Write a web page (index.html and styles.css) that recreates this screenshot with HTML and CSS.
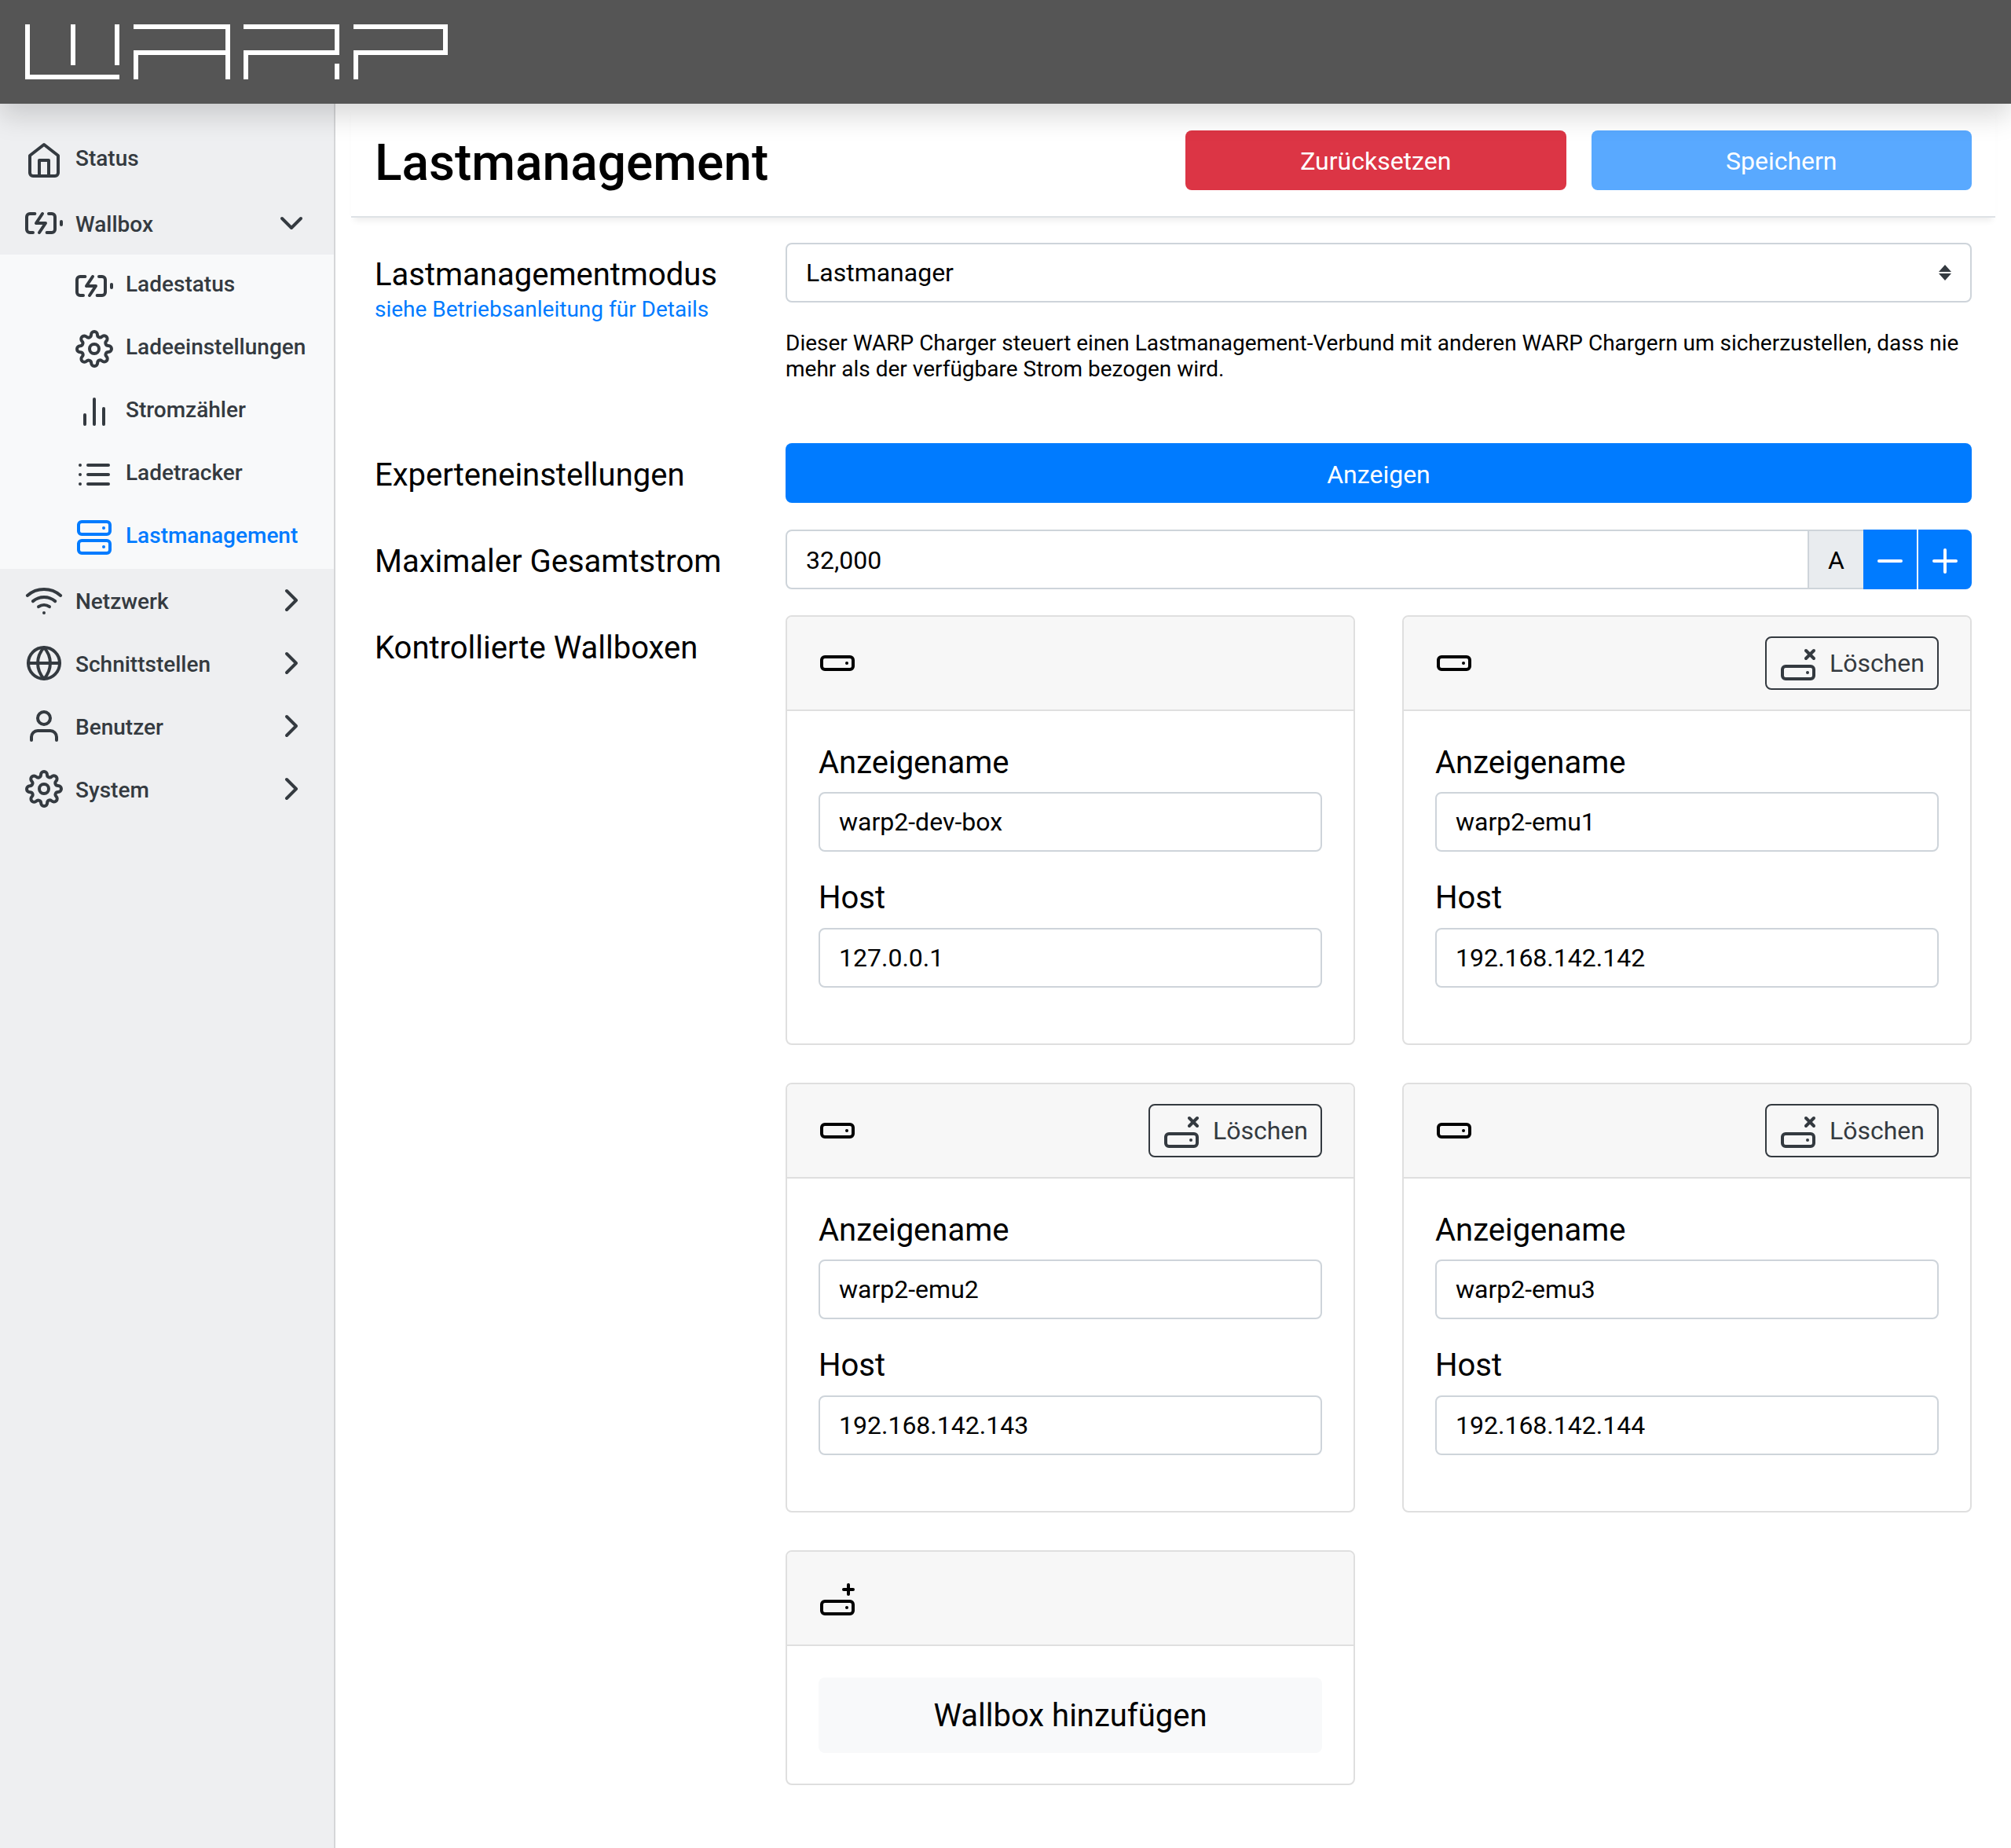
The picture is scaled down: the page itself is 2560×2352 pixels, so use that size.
FILE: index.html
```html
<!DOCTYPE html>
<html lang="de">
<head>
    <meta charset="UTF-8">
    <meta name="viewport" content="width=device-width, initial-scale=1.0">
    <title>WARP Lastmanagement</title>
    <link rel="stylesheet" href="styles.css">
</head>
<body>
    <svg width="0" height="0" class="defs">
        <symbol id="i-charger" viewBox="0 0 24 24"><path d="M5 18H3a2 2 0 0 1-2-2V8a2 2 0 0 1 2-2h3.19M15 6h2a2 2 0 0 1 2 2v8a2 2 0 0 1-2 2h-3.19"/><line x1="23" y1="13" x2="23" y2="11"/><polyline points="11 6 7 12 13 12 9 18"/></symbol>
        <symbol id="i-home" viewBox="0 0 24 24"><path d="M3 9l9-7 9 7v11a2 2 0 0 1-2 2H5a2 2 0 0 1-2-2z"/><polyline points="9 22 9 12 15 12 15 22"/></symbol>
        <symbol id="i-gear" viewBox="0 0 24 24"><circle cx="12" cy="12" r="3"/><path d="M19.4 15a1.65 1.65 0 0 0 .33 1.82l.06.06a2 2 0 0 1 0 2.83 2 2 0 0 1-2.83 0l-.06-.06a1.65 1.65 0 0 0-1.82-.33 1.65 1.65 0 0 0-1 1.51V21a2 2 0 0 1-2 2 2 2 0 0 1-2-2v-.09A1.65 1.65 0 0 0 9 19.4a1.65 1.65 0 0 0-1.82.33l-.06.06a2 2 0 0 1-2.83 0 2 2 0 0 1 0-2.83l.06-.06a1.65 1.65 0 0 0 .33-1.82 1.65 1.65 0 0 0-1.51-1H3a2 2 0 0 1-2-2 2 2 0 0 1 2-2h.09A1.65 1.65 0 0 0 4.6 9a1.65 1.65 0 0 0-.33-1.82l-.06-.06a2 2 0 0 1 0-2.83 2 2 0 0 1 2.83 0l.06.06a1.65 1.65 0 0 0 1.82.33H9a1.65 1.65 0 0 0 1-1.51V3a2 2 0 0 1 2-2 2 2 0 0 1 2 2v.09a1.65 1.65 0 0 0 1 1.51 1.65 1.65 0 0 0 1.82-.33l.06-.06a2 2 0 0 1 2.83 0 2 2 0 0 1 0 2.83l-.06.06a1.65 1.65 0 0 0-.33 1.82V9a1.65 1.65 0 0 0 1.51 1H21a2 2 0 0 1 2 2 2 2 0 0 1-2 2h-.09a1.65 1.65 0 0 0-1.51 1z"/></symbol>
        <symbol id="i-bars" viewBox="0 0 24 24"><line x1="18" y1="20" x2="18" y2="10"/><line x1="12" y1="20" x2="12" y2="4"/><line x1="6" y1="20" x2="6" y2="14"/></symbol>
        <symbol id="i-list" viewBox="0 0 24 24"><line x1="8" y1="6" x2="21" y2="6"/><line x1="8" y1="12" x2="21" y2="12"/><line x1="8" y1="18" x2="21" y2="18"/><line x1="3" y1="6" x2="3.01" y2="6"/><line x1="3" y1="12" x2="3.01" y2="12"/><line x1="3" y1="18" x2="3.01" y2="18"/></symbol>
        <symbol id="i-server" viewBox="0 0 24 24"><rect x="2" y="2" width="20" height="8" rx="2"/><rect x="2" y="14" width="20" height="8" rx="2"/><line x1="18" y1="6" x2="18.01" y2="6"/><line x1="18" y1="18" x2="18.01" y2="18"/></symbol>
        <symbol id="i-wifi" viewBox="0 0 24 24"><path d="M5 12.55a11 11 0 0 1 14.08 0"/><path d="M1.42 9a16 16 0 0 1 21.16 0"/><path d="M8.53 16.11a6 6 0 0 1 6.95 0"/><line x1="12" y1="20" x2="12.01" y2="20"/></symbol>
        <symbol id="i-globe" viewBox="0 0 24 24"><circle cx="12" cy="12" r="10"/><line x1="2" y1="12" x2="22" y2="12"/><path d="M12 2a15.3 15.3 0 0 1 4 10 15.3 15.3 0 0 1-4 10 15.3 15.3 0 0 1-4-10 15.3 15.3 0 0 1 4-10z"/></symbol>
        <symbol id="i-user" viewBox="0 0 24 24"><path d="M20 21v-2a4 4 0 0 0-4-4H8a4 4 0 0 0-4 4v2"/><circle cx="12" cy="7" r="4"/></symbol>
        <symbol id="i-down" viewBox="0 0 24 24"><polyline points="6 9 12 15 18 9"/></symbol>
        <symbol id="i-right" viewBox="0 0 24 24"><polyline points="9 18 15 12 9 6"/></symbol>
        <symbol id="i-box" viewBox="0 0 24 24"><rect x="2" y="8" width="20" height="8" rx="2"/><line x1="18" y1="12" x2="18.01" y2="12"/></symbol>
        <symbol id="i-box-x" viewBox="0 0 24 24"><rect x="2" y="14" width="20" height="8" rx="2"/><line x1="18" y1="18" x2="18.01" y2="18"/><line x1="17" y1="4" x2="22" y2="9"/><line x1="22" y1="4" x2="17" y2="9"/></symbol>
        <symbol id="i-box-plus" viewBox="0 0 24 24"><rect x="2" y="14" width="20" height="8" rx="2"/><line x1="18" y1="18" x2="18.01" y2="18"/><line x1="19" y1="3.5" x2="19" y2="9.5"/><line x1="16" y1="6.5" x2="22" y2="6.5"/></symbol>
        <symbol id="i-minus" viewBox="0 0 24 24"><line x1="5" y1="12" x2="19" y2="12"/></symbol>
        <symbol id="i-plus" viewBox="0 0 24 24"><line x1="12" y1="5" x2="12" y2="19"/><line x1="5" y1="12" x2="19" y2="12"/></symbol>
    </svg>

    <header class="topbar">
        <svg class="logo" viewBox="0 0 538 70" width="538" height="70" role="img" aria-label="WARP">
            <path d="M3 0V67H120M61 0V52M117 0V52"/>
            <path d="M138 3H258V70M141 70V36H261"/>
            <path d="M278 3H397V36H278M281 70V36M397 50V70"/>
            <path d="M418 3H535V36H418M421 70V36M535 3V36H538M535 3H538"/>
        </svg>
    </header>

    <div class="layout">
        <nav class="sidebar">
            <a class="nav-item raised"><svg class="icon"><use href="#i-home"/></svg><span>Status</span></a>
            <a class="nav-item"><svg class="icon"><use href="#i-charger"/></svg><span>Wallbox</span><svg class="icon chevron"><use href="#i-down"/></svg></a>
            <div class="subnav">
                <a class="nav-item raised"><svg class="icon"><use href="#i-charger"/></svg><span>Ladestatus</span></a>
                <a class="nav-item raised"><svg class="icon"><use href="#i-gear"/></svg><span>Ladeeinstellungen</span></a>
                <a class="nav-item raised"><svg class="icon"><use href="#i-bars"/></svg><span>Stromzähler</span></a>
                <a class="nav-item raised"><svg class="icon"><use href="#i-list"/></svg><span>Ladetracker</span></a>
                <a class="nav-item raised active"><svg class="icon"><use href="#i-server"/></svg><span>Lastmanagement</span></a>
            </div>
            <a class="nav-item"><svg class="icon"><use href="#i-wifi"/></svg><span>Netzwerk</span><svg class="icon chevron"><use href="#i-right"/></svg></a>
            <a class="nav-item"><svg class="icon"><use href="#i-globe"/></svg><span>Schnittstellen</span><svg class="icon chevron"><use href="#i-right"/></svg></a>
            <a class="nav-item"><svg class="icon"><use href="#i-user"/></svg><span>Benutzer</span><svg class="icon chevron"><use href="#i-right"/></svg></a>
            <a class="nav-item"><svg class="icon"><use href="#i-gear"/></svg><span>System</span><svg class="icon chevron"><use href="#i-right"/></svg></a>
        </nav>

        <main class="content">
            <div class="page-head">
                <h1>Lastmanagement</h1>
                <div class="page-actions">
                    <button class="btn btn-red">Zurücksetzen</button>
                    <button class="btn btn-blue disabled">Speichern</button>
                </div>
            </div>

            <div class="form-row">
                <div class="form-label">
                    <label>Lastmanagementmodus</label>
                    <a class="help-link">siehe Betriebsanleitung für Details</a>
                </div>
                <div>
                    <div class="select">Lastmanager
                        <svg class="select-arrows" viewBox="0 0 16 20" width="16" height="20"><path d="M8 0L16 9H0zM8 20L0 11H16z"/></svg>
                    </div>
                    <p class="hint">Dieser WARP Charger steuert einen Lastmanagement-Verbund mit anderen WARP Chargern um sicherzustellen, dass nie mehr als der verfügbare Strom bezogen wird.</p>
                </div>
            </div>

            <div class="form-row">
                <div class="form-label"><label>Experteneinstellungen</label></div>
                <button class="btn btn-blue btn-wide">Anzeigen</button>
            </div>

            <div class="form-row">
                <div class="form-label"><label>Maximaler Gesamtstrom</label></div>
                <div class="input-group">
                    <div class="input">32,000</div>
                    <span class="addon">A</span>
                    <button class="step"><svg class="icon"><use href="#i-minus"/></svg></button>
                    <button class="step"><svg class="icon"><use href="#i-plus"/></svg></button>
                </div>
            </div>

            <div class="form-row">
                <div class="form-label"><label>Kontrollierte Wallboxen</label></div>
                <div class="card-grid">
                    <section class="card">
                        <div class="card-head"><svg class="icon"><use href="#i-box"/></svg></div>
                        <div class="card-body">
                            <label>Anzeigename</label>
                            <div class="input">warp2-dev-box</div>
                            <label>Host</label>
                            <div class="input">127.0.0.1</div>
                        </div>
                    </section>
                    <section class="card">
                        <div class="card-head"><svg class="icon"><use href="#i-box"/></svg>
                            <button class="btn-delete"><svg class="icon"><use href="#i-box-x"/></svg>Löschen</button></div>
                        <div class="card-body">
                            <label>Anzeigename</label>
                            <div class="input">warp2-emu1</div>
                            <label>Host</label>
                            <div class="input">192.168.142.142</div>
                        </div>
                    </section>
                    <section class="card">
                        <div class="card-head"><svg class="icon"><use href="#i-box"/></svg>
                            <button class="btn-delete"><svg class="icon"><use href="#i-box-x"/></svg>Löschen</button></div>
                        <div class="card-body">
                            <label>Anzeigename</label>
                            <div class="input">warp2-emu2</div>
                            <label>Host</label>
                            <div class="input">192.168.142.143</div>
                        </div>
                    </section>
                    <section class="card">
                        <div class="card-head"><svg class="icon"><use href="#i-box"/></svg>
                            <button class="btn-delete"><svg class="icon"><use href="#i-box-x"/></svg>Löschen</button></div>
                        <div class="card-body">
                            <label>Anzeigename</label>
                            <div class="input">warp2-emu3</div>
                            <label>Host</label>
                            <div class="input">192.168.142.144</div>
                        </div>
                    </section>
                    <section class="card">
                        <div class="card-head"><svg class="icon"><use href="#i-box-plus"/></svg></div>
                        <div class="card-body card-body-add">
                            <button class="btn-add">Wallbox hinzufügen</button>
                        </div>
                    </section>
                </div>
            </div>
        </main>
    </div>
</body>
</html>
```

FILE: styles.css
```css
* {
    box-sizing: border-box;
}
body {
    margin: 0;
    height: 2352px;
    overflow: hidden;
    display: flex;
    flex-direction: column;
    font-family: Roboto, "Liberation Sans", sans-serif;
    font-size: 32px;
    line-height: 48px;
    color: #000;
    background: #fff;
}
.defs {
    position: absolute;
}
.icon {
    width: 48px;
    height: 48px;
    flex: none;
    fill: none;
    stroke: currentColor;
    stroke-width: 2;
    stroke-linecap: round;
    stroke-linejoin: round;
}

.topbar {
    height: 132px;
    flex: none;
    padding: 31px 32px 0;
    background: #555;
    box-shadow: 0 16px 32px rgba(0, 0, 0, 0.15);
    position: relative;
    z-index: 1;
}
.logo {
    display: block;
    fill: none;
    stroke: #fff;
    stroke-width: 6;
}

.layout {
    flex: 1;
    display: flex;
    min-height: 0;
}
.sidebar {
    width: 427px;
    flex: none;
    background: #eeeff1;
    border-right: 2px solid #d5d6d8;
    padding-top: 32px;
}
.nav-item {
    height: 80px;
    display: flex;
    align-items: center;
    gap: 16px;
    padding: 0 32px;
    font-size: 28px;
    font-weight: 500;
    color: #343a40;
}
.nav-item span {
    margin-top: 4px;
}
.nav-item.raised span {
    margin-top: 0;
    margin-bottom: 4px;
}
.chevron {
    margin-left: auto;
    margin-right: -2px;
}
.subnav {
    background: #f8f9fa;
}
.subnav .nav-item {
    padding-left: 96px;
}
.nav-item.active {
    color: #007bff;
}

.content {
    flex: 1;
    min-width: 0;
    padding: 0 50px 0 20px;
}
.page-head {
    height: 145px;
    display: flex;
    align-items: flex-start;
    justify-content: space-between;
    margin-right: -30px;
    padding: 34px 30px 0;
    background: #fff;
    border-bottom: 2px solid #dee2e6;
    box-shadow: 0 8px 8px -4px rgba(0, 0, 0, 0.07);
}
h1 {
    margin: 4px 0 0;
    font-size: 64px;
    line-height: 76px;
    font-weight: 500;
}
.page-actions {
    width: 1001px;
    display: grid;
    grid-template-columns: 1fr 1fr;
    gap: 32px;
}

.btn {
    height: 76px;
    padding: 2px 0 0;
    border: 0;
    border-radius: 8px;
    font: inherit;
    color: #fff;
}
.btn-red {
    background: #dc3545;
}
.btn-blue {
    background: #007bff;
}
.btn-blue.disabled {
    background: #59a9ff;
}
.btn-wide {
    width: 100%;
    padding-top: 4px;
}

.form-row {
    display: grid;
    grid-template-columns: 523px 1fr;
    padding-left: 30px;
    margin-top: 34px;
}
.page-head + .form-row {
    margin-top: 32px;
}
.form-row:last-child {
    margin-top: 33px;
}
.form-label label {
    display: block;
    height: 76px;
    padding-top: 3px;
    font-size: 40px;
    line-height: 76px;
}
.form-row:last-child .form-label label {
    padding-top: 4px;
}
.help-link {
    display: block;
    margin-top: -11px;
    font-size: 28px;
    line-height: 40px;
    color: #007bff;
}
.select,
.input {
    height: 76px;
    padding: 12px 24px;
    background: #fff;
    border: 2px solid #ced4da;
    border-radius: 8px;
    line-height: 48px;
}
.select {
    position: relative;
}
.select-arrows {
    position: absolute;
    right: 24px;
    top: 26px;
    fill: #343a40;
}
.hint {
    margin: 35px 0 44px;
    font-size: 28px;
    line-height: 33px;
}

.input-group {
    display: flex;
}
.input-group .input {
    flex: 1;
    padding-top: 13px;
    border-radius: 8px 0 0 8px;
}
.addon {
    width: 71px;
    margin-left: -2px;
    text-align: center;
    background: #e9ecef;
    border: 2px solid #ced4da;
    border-right: 0;
    padding-top: 13px;
}
.step {
    width: 68px;
    padding: 4px 0 0;
    border: 0;
    background: #007bff;
    color: #fff;
    display: flex;
    align-items: center;
    justify-content: center;
}
.step + .step {
    margin-left: 2px;
    border-radius: 0 8px 8px 0;
}

.card-grid {
    display: grid;
    grid-template-columns: 725px 725px;
    gap: 48px 60px;
}
.card {
    border: 2px solid #dfdfdf;
    border-radius: 8px;
    overflow: hidden;
}
.card-head {
    height: 120px;
    display: flex;
    align-items: center;
    justify-content: space-between;
    padding: 0 40px;
    background: #f7f7f7;
    border-bottom: 2px solid #dfdfdf;
}
.card-body {
    padding: 39px 40px 40px;
}
.card-body label {
    display: block;
    font-size: 40px;
    line-height: 54px;
    margin-bottom: 10px;
}
.card-body .input {
    margin-bottom: 32px;
}
.card-body .input + label {
    margin-bottom: 11px;
}
.card-body .input:last-child {
    margin-bottom: 31px;
}
.card-body-add {
    padding: 40px 40px 39px;
}
.btn-delete {
    height: 68px;
    display: flex;
    align-items: center;
    gap: 16px;
    padding: 0 16px;
    background: transparent;
    border: 2px solid #343a40;
    border-radius: 8px;
    font: inherit;
    color: #343a40;
}
.btn-add {
    display: block;
    width: 100%;
    height: 96px;
    padding-top: 2px;
    border: 0;
    border-radius: 8px;
    background: #f8f9fa;
    font-family: inherit;
    font-size: 40px;
    color: #000;
}
```
